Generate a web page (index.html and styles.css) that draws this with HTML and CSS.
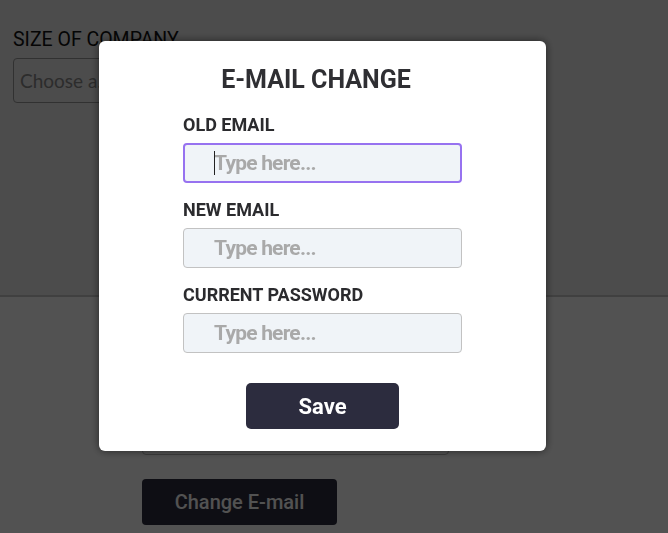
FILE: index.html
```html
<!DOCTYPE html>
<html lang="en">
<head>
<meta charset="utf-8">
<title>E-mail change</title>
<link rel="stylesheet" href="styles.css">
</head>
<body>
<div class="page">
  <section class="company">
    <div class="field-label">SIZE OF COMPANY</div>
    <div class="select">Choose a...</div>
  </section>
  <section class="account">
    <div class="account-input"></div>
    <button class="change-btn" type="button">Change E-mail</button>
  </section>
</div>
<div class="overlay"></div>
<div class="modal">
  <h2 class="modal-title">E-MAIL CHANGE</h2>
  <form class="modal-form">
    <div class="group">
      <label class="label" for="old">OLD EMAIL</label>
      <div class="input-wrap">
        <input class="input input-focused" id="old" type="text" placeholder="Type here...">
        <span class="caret"></span>
      </div>
    </div>
    <div class="group">
      <label class="label" for="new">NEW EMAIL</label>
      <div class="input-wrap">
        <input class="input" id="new" type="text" placeholder="Type here...">
      </div>
    </div>
    <div class="group">
      <label class="label" for="pw">CURRENT PASSWORD</label>
      <div class="input-wrap">
        <input class="input" id="pw" type="text" placeholder="Type here...">
      </div>
    </div>
    <button class="save-btn" type="button">Save</button>
  </form>
</div>
</body>
</html>
```

FILE: styles.css
```css
* { box-sizing: border-box; }

html, body {
  margin: 0;
  padding: 0;
  width: 668px;
  height: 533px;
  overflow: hidden;
  font-family: Roboto, "Liberation Sans", sans-serif;
}

.page {
  height: 533px;
  background: #ffffff;
}

.company {
  height: 295px;
  background: #ebebeb;
  padding: 28px 0 0 13px;
}

.field-label {
  font-size: 19.5px;
  line-height: 23px;
  color: #111111;
}

.select {
  margin-top: 7px;
  width: 330px;
  height: 45px;
  border: 1px solid #9a9a9a;
  border-radius: 4px;
  background: #ebebeb;
  padding: 0 0 0 6px;
  display: flex;
  align-items: center;
  font-family: Lato, "Open Sans", sans-serif;
  font-size: 19px;
  color: #8a8a8a;
}

.account {
  border-top: 2px solid #c8c8c8;
  padding: 113px 0 0 142px;
  background: #ffffff;
}

.account-input {
  width: 307px;
  height: 45px;
  border: 1px solid #b8b8b8;
  border-radius: 4px;
}

.change-btn {
  display: block;
  margin-top: 24px;
  width: 195px;
  height: 46px;
  border: none;
  border-radius: 4px;
  background: #2c2c3e;
  color: #ffffff;
  font-family: Roboto, "Liberation Sans", sans-serif;
  font-weight: 500;
  font-size: 20px;
}

.overlay {
  position: fixed;
  inset: 0;
  background: rgba(0, 0, 0, 0.68);
}

.modal {
  position: fixed;
  left: 99px;
  top: 41px;
  width: 447px;
  height: 410px;
  background: #ffffff;
  border-radius: 6px;
  box-shadow: 0 0 8px rgba(0, 0, 0, 0.55);
  padding-top: 25px;
  display: flex;
  flex-direction: column;
  align-items: center;
}

.modal-title {
  margin: 0 13px 0 0;
  font-size: 25px;
  line-height: 28px;
  font-weight: 700;
  color: #2f2f33;
}

.modal-form {
  margin-top: 20px;
  width: 279px;
  display: flex;
  flex-direction: column;
}

.group {
  display: flex;
  flex-direction: column;
  margin-bottom: 16px;
}

.group:last-of-type {
  margin-bottom: 0;
}

.label {
  font-size: 18px;
  line-height: 21px;
  font-weight: 700;
  color: #2b2b2e;
  margin-bottom: 8px;
}

.input-wrap {
  position: relative;
}

.input {
  display: block;
  width: 279px;
  height: 40px;
  border: 1px solid #c2c2c2;
  border-radius: 4px;
  background: #f0f4f8;
  padding: 0 0 0 30px;
  font-family: Roboto, "Liberation Sans", sans-serif;
  font-size: 21px;
  font-weight: 700;
  letter-spacing: -0.8px;
  color: #333333;
  outline: none;
}

.input::placeholder {
  color: #a9a9a9;
  opacity: 1;
}

.input-focused {
  border: 2px solid #9772f0;
  padding-left: 29px;
}

.caret {
  position: absolute;
  left: 31px;
  top: 8px;
  width: 1px;
  height: 24px;
  background: #222222;
}

.save-btn {
  align-self: center;
  margin-top: 30px;
  width: 153px;
  height: 46px;
  border: none;
  border-radius: 5px;
  background: #2c2c3e;
  color: #ffffff;
  font-family: Roboto, "Liberation Sans", sans-serif;
  font-size: 22px;
  font-weight: 700;
}
```
